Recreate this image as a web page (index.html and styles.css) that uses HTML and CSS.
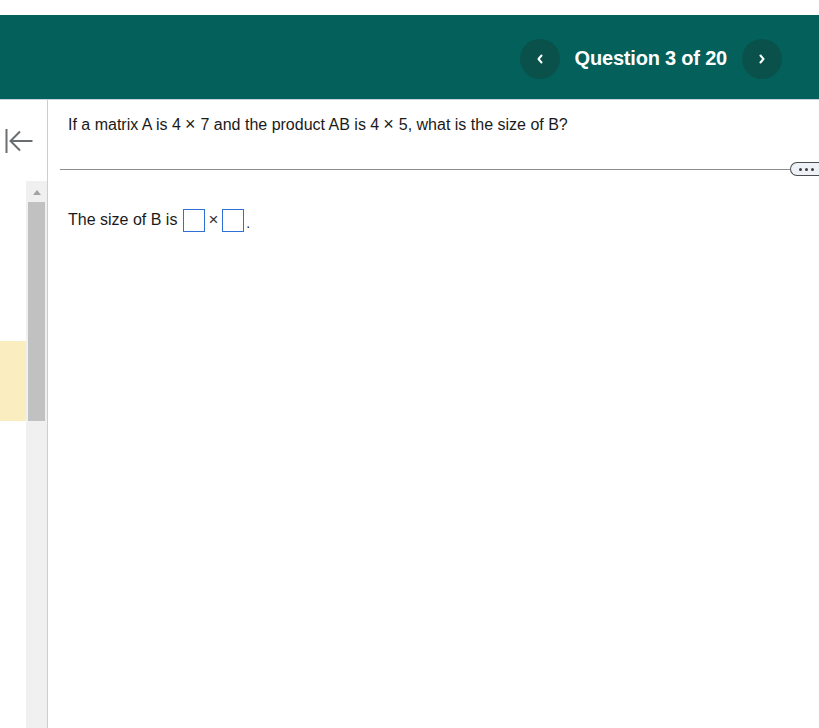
FILE: index.html
```html
<!DOCTYPE html>
<html>
<head>
<meta charset="utf-8">
<link rel="stylesheet" href="styles.css">
</head>
<body>
<div class="topgap"></div>
<header class="header">
  <button class="nav-btn" aria-label="Previous">
    <svg width="10" height="12" viewBox="0 0 10 12"><path d="M6.5 2.5 L3.5 6 L6.5 9.5" fill="none" stroke="#fff" stroke-width="2" stroke-linecap="round" stroke-linejoin="round"/></svg>
  </button>
  <span class="qtitle">Question 3 of 20</span>
  <button class="nav-btn" aria-label="Next">
    <svg width="10" height="12" viewBox="0 0 10 12"><path d="M3.5 2.5 L6.5 6 L3.5 9.5" fill="none" stroke="#fff" stroke-width="2" stroke-linecap="round" stroke-linejoin="round"/></svg>
  </button>
</header>
<div class="main">
  <aside class="sidebar">
    <div class="collapse">
      <svg width="30" height="28" viewBox="0 0 30 28"><path d="M1.5 2 V26 M27.5 14 H6.5 M15 4.5 L5.5 14 L15 23.5" fill="none" stroke="#6b6e70" stroke-width="2"/></svg>
    </div>
    <div class="scrollarea">
      <div class="list">
        <div class="item-spacer"></div>
        <div class="item-active"></div>
      </div>
      <div class="scrollbar">
        <div class="sb-up"></div>
        <div class="sb-thumb"></div>
      </div>
    </div>
  </aside>
  <section class="content">
    <p class="question">If a matrix A is 4<span class="times">×</span>7 and the product AB is 4<span class="times">×</span>5, what is the size of B?</p>
    <div class="divider">
      <div class="rule"></div>
      <div class="pill"><span class="dot"></span><span class="dot"></span><span class="dot"></span></div>
    </div>
    <p class="answer"><span class="lead">The size of B is</span><span class="box"></span><span class="x">×</span><span class="box"></span><span class="period">.</span></p>
  </section>
</div>
</body>
</html>
```
FILE: styles.css
```css
html, body {
  margin: 0;
  padding: 0;
  background: #fff;
  font-family: "Liberation Sans", Arial, sans-serif;
  color: #1a1a1a;
  overflow: hidden;
  height: 728px;
}
.topgap { height: 15px; }
.header {
  height: 85px;
  box-sizing: border-box;
  padding-top: 3px;
  background: #03605a;
  border-bottom: 1px solid #c9d2dc;
  display: flex;
  align-items: center;
  justify-content: flex-end;
  padding-right: 37px;
}
.nav-btn {
  width: 40px;
  height: 40px;
  border-radius: 50%;
  border: none;
  background: #0a514c;
  display: flex;
  align-items: center;
  justify-content: center;
  padding: 0;
}
.qtitle {
  color: #fff;
  font-weight: bold;
  font-size: 20px;
  margin: 0 15px 0 15px;
  letter-spacing: -0.2px;
}
.main {
  display: flex;
  height: 628px;
}
.sidebar {
  width: 47px;
  border-right: 1px solid #cbcbd9;
  display: flex;
  flex-direction: column;
}
.collapse {
  height: 81px;
  padding: 27px 0 0 5px;
  box-sizing: border-box;
}
.collapse svg { display: block; }
.scrollarea {
  flex: 1;
  display: flex;
}
.list { width: 26px; }
.item-spacer { height: 160px; }
.item-active {
  height: 80px;
  background: #faedbf;
}
.scrollbar {
  width: 21px;
  background: #f1f0f0;
  display: flex;
  flex-direction: column;
  align-items: center;
}
.sb-up {
  width: 0;
  height: 0;
  border-left: 4px solid transparent;
  border-right: 4px solid transparent;
  border-bottom: 5px solid #a3a3a3;
  margin-top: 9px;
  margin-bottom: 7px;
}
.sb-thumb {
  width: 17px;
  height: 219px;
  background: #c1c1c1;
}
.content {
  flex: 1;
  padding-left: 20px;
}
.question {
  margin: 16px 0 0 0;
  font-size: 16px;
  line-height: 18px;
  color: #1a1a1a;
}
.times {
  font-size: 18px;
  line-height: 16px;
  margin: 0 5px 0 4px;
}
.divider {
  display: flex;
  align-items: center;
  margin: 27px 0 0 -8px;
  height: 16px;
}
.rule {
  flex: 1;
  height: 1px;
  background: #8a8c8e;
}
.pill {
  width: 40px;
  height: 12px;
  border: 1px solid #4a4c4e;
  border-right: none;
  border-radius: 7px 0 0 7px;
  background: #eef2f6;
  display: flex;
  align-items: center;
  padding-left: 8px;
  gap: 3px;
  margin-right: -20px;
}
.dot {
  width: 3px;
  height: 3px;
  border-radius: 50%;
  background: #3a3c40;
}
.answer {
  margin: 31px 0 0 0;
  font-size: 16px;
  line-height: 24px;
  display: flex;
  align-items: center;
  color: #1a1a1a;
}
.lead { margin-right: 6px; }
.box {
  display: inline-block;
  width: 20px;
  height: 21px;
  border: 1px solid #2f6fd6;
}
.x {
  font-size: 17px;
  margin: 0 4px 0 3px;
  color: #333;
}
.period {
  margin-left: 2px;
  font-size: 14px;
  align-self: flex-end;
  line-height: 18px;
}
```
